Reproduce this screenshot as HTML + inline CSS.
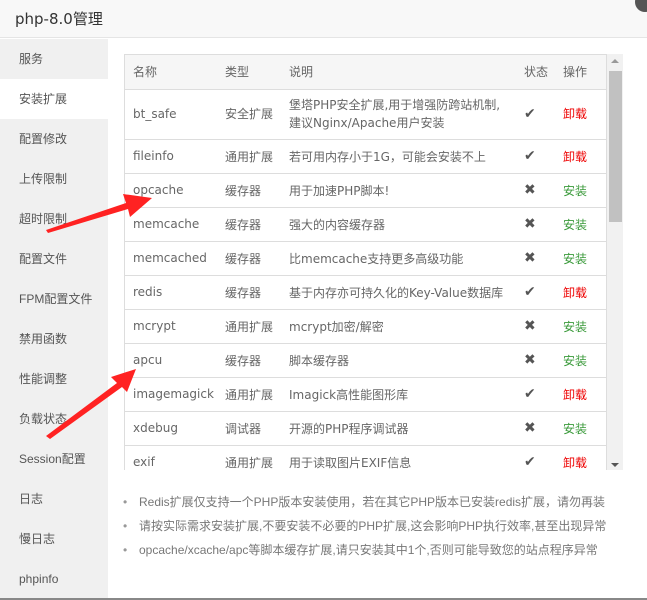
<!DOCTYPE html>
<html><head><meta charset="utf-8"><style>
*{margin:0;padding:0;box-sizing:border-box}
body{width:647px;height:600px;overflow:hidden;background:#fff;font-family:"Liberation Sans","Noto Sans CJK SC",sans-serif;color:#555;position:relative}
.hdr{position:absolute;left:0;top:0;width:647px;height:38px;background:#f8f8f8;border-bottom:1px solid #e5e5e5;font-family:"DejaVu Sans","Noto Sans CJK SC",sans-serif;font-size:15px;color:#333;line-height:38px;padding-left:15px}
.close{position:absolute;right:-8px;top:-8px;width:20px;height:20px;border-radius:50%;background:#555}
.side{position:absolute;left:0;top:39px;width:108px;height:561px;background:#f0f0f0}
.side div{height:40px;line-height:40px;padding-left:19px;font-size:12px;color:#555}
.side .on{background:#fff}
.tbl{position:absolute;left:124px;top:54px;width:483px;height:416px;border:1px solid #ddd;border-bottom:none;overflow:hidden}
table{border-collapse:collapse;width:100%;font-size:12px;font-family:"DejaVu Sans","Noto Sans CJK SC",sans-serif}
td,th{font-weight:normal;text-align:left;padding-left:8px;border-bottom:1px solid #ddd;color:#666;white-space:nowrap}
th{height:34px;background:#f6f6f6;color:#666}
td{height:34px}
tr.tall td{height:50px;line-height:18px}
.ok{color:#555;font-size:14px}
.red{color:#e00}
.grn{color:#3a9a3a}
.sb{position:absolute;left:607px;top:54px;width:16px;height:416px;background:#f1f1f1}
.thumb{position:absolute;left:609px;top:71px;width:13px;height:151px;background:#c1c1c1}
.notes{position:absolute;left:123px;top:490px;font-size:12px;color:#777}
.notes div{height:24px;line-height:24px}
.notes span{display:inline-block;width:16px;color:#999}
.bot{position:absolute;left:0;top:598px;width:647px;height:2px;background:#888}
</style></head><body>
<div class="hdr">php-8.0管理</div>
<div class="close"></div>
<div class="side">
<div>服务</div><div class="on">安装扩展</div><div>配置修改</div><div>上传限制</div><div>超时限制</div><div>配置文件</div><div>FPM配置文件</div><div>禁用函数</div><div>性能调整</div><div>负载状态</div><div>Session配置</div><div>日志</div><div>慢日志</div><div>phpinfo</div>
</div>
<div class="tbl"><table>
<colgroup><col style="width:92px"><col style="width:64px"><col style="width:235px"><col style="width:39px"><col></colgroup>
<tr><th>名称</th><th>类型</th><th>说明</th><th>状态</th><th>操作</th></tr>
<tr class="tall"><td>bt_safe</td><td>安全扩展</td><td>堡塔PHP安全扩展,用于增强防跨站机制,<br>建议Nginx/Apache用户安装</td><td class="ok">✔</td><td class="red">卸载</td></tr>
<tr><td>fileinfo</td><td>通用扩展</td><td>若可用内存小于1G，可能会安装不上</td><td class="ok">✔</td><td class="red">卸载</td></tr>
<tr><td>opcache</td><td>缓存器</td><td>用于加速PHP脚本!</td><td class="ok">✖</td><td class="grn">安装</td></tr>
<tr><td>memcache</td><td>缓存器</td><td>强大的内容缓存器</td><td class="ok">✖</td><td class="grn">安装</td></tr>
<tr><td>memcached</td><td>缓存器</td><td>比memcache支持更多高级功能</td><td class="ok">✖</td><td class="grn">安装</td></tr>
<tr><td>redis</td><td>缓存器</td><td>基于内存亦可持久化的Key-Value数据库</td><td class="ok">✔</td><td class="red">卸载</td></tr>
<tr><td>mcrypt</td><td>通用扩展</td><td>mcrypt加密/解密</td><td class="ok">✖</td><td class="grn">安装</td></tr>
<tr><td>apcu</td><td>缓存器</td><td>脚本缓存器</td><td class="ok">✖</td><td class="grn">安装</td></tr>
<tr><td>imagemagick</td><td>通用扩展</td><td>Imagick高性能图形库</td><td class="ok">✔</td><td class="red">卸载</td></tr>
<tr><td>xdebug</td><td>调试器</td><td>开源的PHP程序调试器</td><td class="ok">✖</td><td class="grn">安装</td></tr>
<tr><td>exif</td><td>通用扩展</td><td>用于读取图片EXIF信息</td><td class="ok">✔</td><td class="red">卸载</td></tr>
</table></div>
<div class="sb"></div><div class="thumb"></div>
<div style="position:absolute;left:611px;top:59px;width:0;height:0;border:4px solid transparent;border-bottom:4px solid #999;border-top:none"></div>
<div style="position:absolute;left:611px;top:463px;width:0;height:0;border:4px solid transparent;border-top:4px solid #555;border-bottom:none"></div>
<div class="notes">
<div><span>•</span>Redis扩展仅支持一个PHP版本安装使用，若在其它PHP版本已安装redis扩展，请勿再装</div>
<div><span>•</span>请按实际需求安装扩展,不要安装不必要的PHP扩展,这会影响PHP执行效率,甚至出现异常</div>
<div><span>•</span>opcache/xcache/apc等脚本缓存扩展,请只安装其中1个,否则可能导致您的站点程序异常</div>
</div>
<svg width="647" height="600" style="position:absolute;left:0;top:0">
<polygon points="46,230 126,203 123,194 152,198 130,217 128,209 48,233" fill="#f22"/>
<polygon points="46,436 117,383 111,377 136,369 127,392 122,387 50,439" fill="#f22"/>
</svg>
<div class="bot"></div>
</body></html>
